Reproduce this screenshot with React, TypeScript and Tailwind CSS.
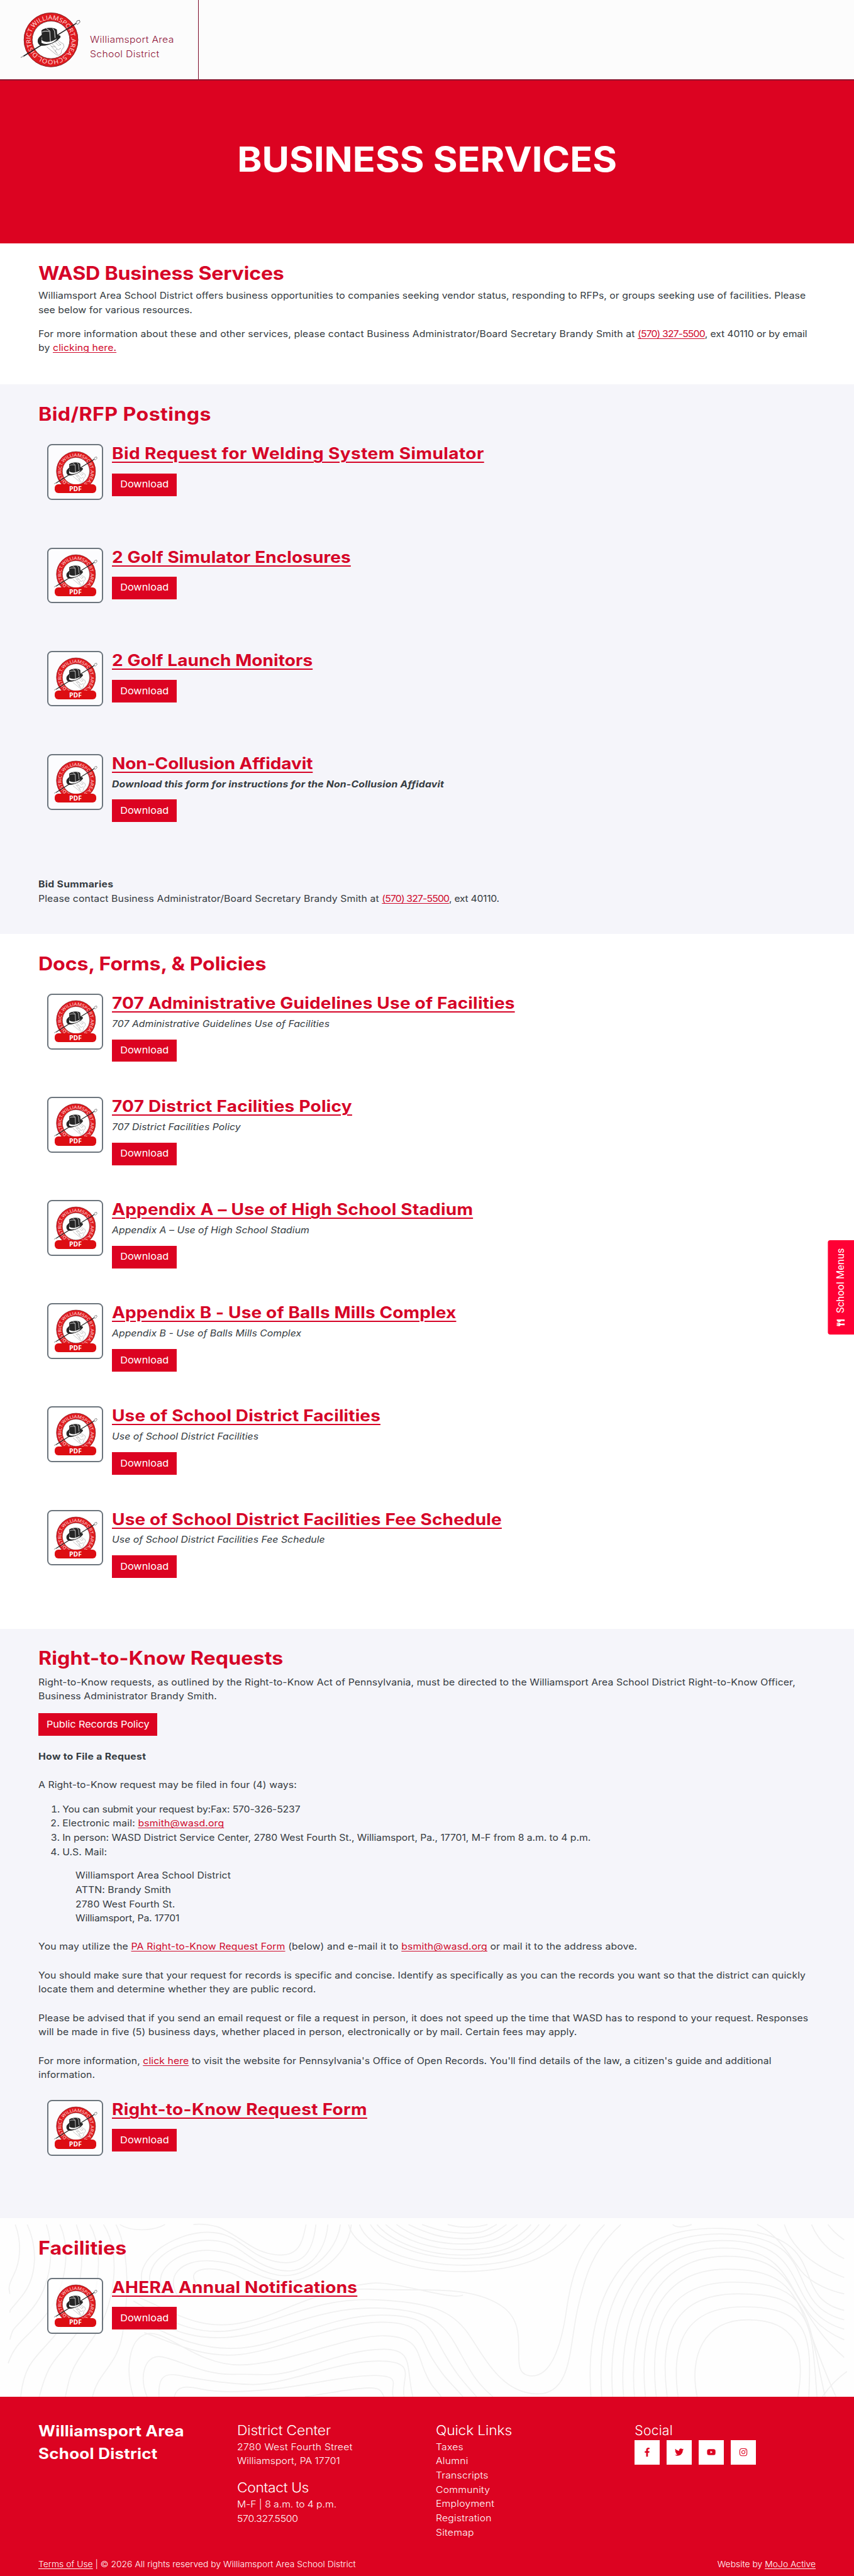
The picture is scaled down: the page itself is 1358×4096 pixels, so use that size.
import * as React from 'react';
import { FaFacebookF, FaTwitter, FaYoutube, FaInstagram, FaUtensils } from 'react-icons/fa';

type Doc = { title: string; tracking: string; desc?: string; strong?: boolean };

const BIDS: Doc[] = [
  { title: 'Bid Request for Welding System Simulator', tracking: 'tracking-[0.4px]' },
  { title: '2 Golf Simulator Enclosures', tracking: 'tracking-[0.08px]' },
  { title: '2 Golf Launch Monitors', tracking: 'tracking-[0.06px]' },
  {
    title: 'Non-Collusion Affidavit',
    tracking: 'tracking-[-0.1px]',
    desc: 'Download this form for instructions for the Non-Collusion Affidavit',
    strong: true,
  },
];

const DOCS: Doc[] = [
  {
    title: '707 Administrative Guidelines Use of Facilities',
    tracking: 'tracking-[0.18px]',
    desc: '707 Administrative Guidelines Use of Facilities',
  },
  { title: '707 District Facilities Policy', tracking: 'tracking-[0.23px]', desc: '707 District Facilities Policy' },
  {
    title: 'Appendix A – Use of High School Stadium',
    tracking: 'tracking-[0.22px]',
    desc: 'Appendix A – Use of High School Stadium',
  },
  {
    title: 'Appendix B - Use of Balls Mills Complex',
    tracking: 'tracking-[0.13px]',
    desc: 'Appendix B - Use of Balls Mills Complex',
  },
  { title: 'Use of School District Facilities', tracking: 'tracking-[0.11px]', desc: 'Use of School District Facilities' },
  {
    title: 'Use of School District Facilities Fee Schedule',
    tracking: 'tracking-[0.13px]',
    desc: 'Use of School District Facilities Fee Schedule',
  },
];

const QUICK_LINKS = ['Taxes', 'Alumni', 'Transcripts', 'Community', 'Employment', 'Registration', 'Sitemap'];

const SOCIAL = [FaFacebookF, FaTwitter, FaYoutube, FaInstagram];

function Seal({ className }: { className?: string }) {
  return (
    <svg viewBox="-52 -47 104 94" className={className}>
      <circle r="38.7" fill="none" stroke="#e01a1f" strokeWidth="14" />
      <circle r="45.4" fill="none" stroke="#7b2326" strokeWidth="1" />
      <circle r="31.7" fill="#fff" stroke="#6b2023" strokeWidth="1" />
      <path id="seal-ring" d="M-29.2-19.6A35.2 35.2 0 0 1 29.2 19.6A35.2 35.2 0 0 1-29.2-19.6" fill="none" />
      <text fill="#ffe3e0" className="font-['Open_Sans'] text-[10.3px]">
        <textPath href="#seal-ring" textLength="215" lengthAdjust="spacingAndGlyphs">
          WILLIAMSPORT.AREA.SCHOOL.DISTRICT.
        </textPath>
      </text>
      {/* cane */}
      <path d="M-47 28L43-28" stroke="#222" strokeWidth="1.7" />
      <path d="M-51 30l5-3" stroke="#aaa" strokeWidth="1.6" />
      <path d="M42-28l2-4 4-1 1 3-4 4z" fill="#fff" stroke="#555" strokeWidth="1" />
      {/* glove */}
      <path
        d="M-7 12L9 25l4 1 4-3 1-6 4-5-1-5-5-3-4-3-3 2M2 7l6 5M7 4l6 6 4-3M12 4l5 5M1 11l6 1 5 5 5-3M10 15l-3 4 4 5M-1 9l11 13"
        fill="none"
        stroke="#b0b0b0"
        strokeWidth="1"
      />
      {/* top hat */}
      <path d="M-21-3c-3 5-1 12 5 13C-5 11 11 3 16-4c1-3-2-4-5-4-4 7-20 12-27 6l2-7c-3 1-5 4-7 6z" fill="#262626" />
      <path d="M-16-1C-11 5 6 2 11-5l-2 5C3 7-10 9-16 5z" fill="#fff" />
      <path d="M-16-16c5-5 22-6 26-1l1 14C4 3-9 6-15 1z" fill="#262626" />
      <path d="M-8-19l6 4 1 18M-15-13c3-2 8-2 12-1M3-19l3 4 1 12" fill="none" stroke="#fff" strokeWidth="1" />
    </svg>
  );
}

function PdfBadge() {
  return (
    <div className="relative size-[94px] shrink-0 rounded-[8px] border-[2.2px] border-[#6c757d] bg-white/70">
      <Seal className="absolute left-[8px] top-[8.5px] h-[68px] w-[76px]" />
      <div className="absolute left-[10px] top-[65px] flex h-[15px] w-[70px] items-center justify-center rounded-[6px] bg-[#dd0d12] font-['Open_Sans'] text-[11px] font-bold leading-none text-white">
        PDF
      </div>
    </div>
  );
}

function Button({ children, className = '' }: { children: React.ReactNode; className?: string }) {
  return (
    <a className={`flex h-[38px] items-center justify-center bg-[#dc0321] text-base text-white ${className}`}>
      <span className="scale-x-[1.08] whitespace-nowrap">{children}</span>
    </a>
  );
}

function Link({ children, className = '' }: { children: React.ReactNode; className?: string }) {
  return <a className={`text-[#d00a2c] underline decoration-1 underline-offset-2 ${className}`}>{children}</a>;
}

function Heading({ children, className }: { children: React.ReactNode; className: string }) {
  return (
    <h2 className={`origin-left scale-x-110 text-[31px] font-bold leading-9 text-[#d60427] w-fit ${className}`}>
      {children}
    </h2>
  );
}

// wide body copy
function Copy({ children, className = '' }: { children: React.ReactNode; className?: string }) {
  return <p className={`w-fit origin-left scale-x-[1.08] whitespace-nowrap ${className}`}>{children}</p>;
}

function DocItem({ doc }: { doc: Doc }) {
  return (
    <article className="flex h-[174px] gap-[15px] pl-[15px]">
      <PdfBadge />
      <div>
        <h3
          className={`w-fit origin-left scale-x-110 whitespace-nowrap text-[27px] font-bold leading-8 text-[#d60427] underline decoration-2 underline-offset-[4px] ${doc.tracking}`}
        >
          {doc.title}
        </h3>
        {doc.desc && (
          <Copy
            className={
              doc.strong
                ? 'mt-[7px] mb-[14px] font-bold italic tracking-[0.2px]'
                : 'mt-[7px] mb-[14px] italic tracking-[0.04px]'
            }
          >
            {doc.desc}
          </Copy>
        )}
        <Button className={doc.desc ? 'w-[109px]' : 'mt-[17px] w-[109px]'}>Download</Button>
      </div>
    </article>
  );
}

const CONTOURS = [
  'M28 75C40 150 38 230 25 290S18 350 18 370',
  'M50 75C70 180 68 300 40 380S20 430 18 450',
  'M85 75C100 180 95 330 60 430S25 500 18 565',
  'M110 75C130 180 122 330 90 440S30 560 15 665',
  'M140 75C160 200 150 400 110 520S45 650 38 807',
  'M165 75C195 200 180 420 140 540S90 650 72 807',
  'M190 75C225 200 210 430 170 560S130 700 120 807',
  'M213 75C240 200 235 400 225 540S180 700 170 807',
  'M220 75C240 105 280 105 303 75',
  // ridge and the valley next to it
  'M355 75Q375 70 400 85C440 120 460 190 505 203S555 150 562 75',
  'M262 330C245 220 320 110 380 108S450 205 505 232S575 180 580 75',
  'M280 360C255 240 320 145 380 142S450 230 505 265S598 200 602 75',
  'M305 380C270 270 330 180 385 185S460 270 510 290S618 200 625 75',
  'M330 390C300 300 330 220 390 230S465 300 515 315S640 220 645 75',
  'M375 350C340 300 355 255 395 265S450 320 480 350S640 340 680 325S830 400 850 375',
  // small basin
  'M640 75C650 180 740 280 855 275S1020 200 1065 75',
  'M660 75C675 170 750 250 855 248S1000 180 1040 75',
  'M680 75C700 150 770 222 855 220S980 160 1010 75',
  'M692 75C720 150 780 207 855 205S965 150 990 75',
  'M708 75C740 140 790 184 855 182S950 140 975 75',
  'M728 75C760 130 800 160 855 158S925 120 950 75',
  'M750 75C785 115 815 136 855 135S910 110 930 75',
  'M775 75C805 100 825 112 858 112S895 95 912 75',
  'M822 75Q858 98 895 75',
  // long waves through the middle
  'M255 385C330 460 370 530 450 490S580 340 680 350S860 330 920 420S930 700 970 717S1030 600 1040 440S1065 180 1110 75',
  'M245 400C320 500 370 560 450 515S590 385 690 395S830 440 860 540S920 790 985 795S1045 600 1060 440S1090 180 1140 75',
  'M250 440C310 530 370 580 450 545S600 425 690 430S810 480 835 580S870 740 905 807',
  'M258 480C310 550 380 625 460 595S610 460 700 460S790 520 815 620S850 740 875 807',
  'M265 535C310 570 370 645 440 628S620 490 700 490S770 560 795 650S825 740 850 807',
  'M245 807C230 700 235 560 270 540S360 672 440 672S640 545 705 548S765 620 780 700S800 770 810 807',
  'M270 807C255 720 265 630 295 637S370 715 430 712S500 725 550 690S650 605 705 605S745 680 758 807',
  'M292 807C290 730 300 705 325 715S400 750 460 755S620 655 695 655S735 730 742 807',
  'M320 807C325 760 340 760 370 775S440 790 500 775S640 715 690 717S715 760 722 807',
  'M560 807C610 790 640 775 670 770S700 785 705 807',
  // right hand peaks
  'M1085 807C1075 500 1110 75 1325 92S1440 380 1550 440',
  'M1105 807C1095 500 1130 110 1325 115S1430 410 1550 480',
  'M1125 807C1115 520 1150 145 1325 143S1430 440 1550 520',
  'M1145 807C1135 540 1170 180 1325 175S1430 450 1550 565',
  'M1165 807C1155 560 1185 215 1330 210S1440 420 1550 640',
  'M1185 807C1175 580 1190 265 1335 265S1460 430 1535 807',
  'M1205 807C1195 600 1200 320 1345 320S1480 450 1515 807',
  'M1225 807C1215 620 1215 370 1355 370S1490 500 1500 807',
  'M1245 807C1235 640 1240 425 1365 425S1490 560 1485 807',
  'M1280 807C1265 640 1290 478 1375 480S1480 600 1465 807',
  'M1390 75C1430 120 1450 210 1470 270S1530 360 1550 370',
  'M1440 75C1450 150 1480 240 1550 300',
  'M1490 75C1500 130 1520 190 1550 220',
  'M1520 75C1530 105 1540 125 1550 140',
  'M1235 75Q1245 95 1270 75',
  'M1510 807Q1530 740 1555 700',
];

function Contours() {
  return (
    <svg viewBox="0 48 1568 759" preserveAspectRatio="none" className="absolute inset-0 size-full">
      <g fill="none" stroke="#f0f0f0" strokeWidth="1.8">
        {CONTOURS.map((d) => (
          <path key={d} d={d} vectorEffect="non-scaling-stroke" />
        ))}
      </g>
    </svg>
  );
}

export default function App() {
  return (
    <div className="relative w-full overflow-hidden bg-white font-['Inter',sans-serif] text-[15.5px] leading-6 text-[#353c42] [zoom:0.9433]">
      <header className="flex h-[136px] border-b-[2.2px] border-[#8c1730] bg-[#fcfcfc]">
        <div className="flex w-[335px] border-r-[1.1px] border-[#7d0c2b] pl-[34px] pt-[20px]">
          <Seal className="h-[94px] w-[104px] shrink-0" />
          <Copy className="ml-[14px] mt-[35px] font-light tracking-[0.3px] text-[#8f1338]">
            Williamsport Area
            <br />
            School District
          </Copy>
        </div>
      </header>

      <section className="flex h-[274px] items-center justify-center bg-[#dc0321]">
        <h1 className="mt-[-9px] scale-x-[1.085] whitespace-nowrap text-[58px] font-bold leading-none text-white">
          BUSINESS SERVICES
        </h1>
      </section>

      <section className="h-[238px] px-[65px] pt-[33px]">
        <Heading className="tracking-[-0.2px]">WASD Business Services</Heading>
        <Copy className="mt-[8px] tracking-[0.04px]">
          Williamsport Area School District offers business opportunities to companies seeking vendor status, responding
          to RFPs, or groups seeking use of facilities. Please
          <br />
          see below for various resources.
        </Copy>
        <Copy className="mt-4 tracking-[0.11px]">
          For more information about these and other services, please contact Business Administrator/Board Secretary
          Brandy Smith at <Link className="tracking-[-0.85px]">(570) 327-5500</Link>
          <span className="tracking-[-0.13px]">, ext 40110 or by email</span>
          <br />
          by <Link>clicking here.</Link>
        </Copy>
      </section>

      <section className="h-[926px] bg-[#f5f5fa] px-[65px] pt-[33px]">
        <Heading className="mb-8 tracking-[0.4px]">Bid/RFP Postings</Heading>
        {BIDS.map((doc) => (
          <DocItem key={doc.title} doc={doc} />
        ))}
        <Copy className="mt-[34px] font-bold tracking-[0.28px]">Bid Summaries</Copy>
        <Copy className="tracking-[0.1px]">
          Please contact Business Administrator/Board Secretary Brandy Smith at{' '}
          <Link className="tracking-[-0.85px]">(570) 327-5500</Link>
          <span className="tracking-[-0.3px]">, ext 40110.</span>
        </Copy>
      </section>

      <section className="h-[1172px] px-[65px] pt-[33px]">
        <Heading className="mb-8 tracking-[-0.1px]">Docs, Forms, &amp; Policies</Heading>
        {DOCS.map((doc) => (
          <DocItem key={doc.title} doc={doc} />
        ))}
      </section>

      <section className="h-[993px] bg-[#f5f5fa] px-[65px] pt-[31px] tracking-[0.07px]">
        <Heading className="tracking-[0.11px]">Right-to-Know Requests</Heading>
        <Copy className="mt-[11px] tracking-[0.1px]">
          Right-to-Know requests, as outlined by the Right-to-Know Act of Pennsylvania, must be directed to the
          Williamsport Area School District Right-to-Know Officer,
          <br />
          Business Administrator Brandy Smith.
        </Copy>
        <Button className="mt-4 w-[200px] tracking-[-0.1px]">Public Records Policy</Button>
        <Copy className="mt-[23px] font-bold tracking-[0.31px]">How to File a Request</Copy>
        <Copy className="mt-6">A Right-to-Know request may be filed in four (4) ways:</Copy>
        <ol className="mt-[17px] w-fit origin-left scale-x-[1.08] list-decimal whitespace-nowrap pl-[37.5px]">
          <li className="tracking-[-0.15px]">You can submit your request by:Fax: 570-326-5237</li>
          <li className="tracking-[0.15px]">
            Electronic mail: <Link>bsmith@wasd.org</Link>
          </li>
          <li className="tracking-[-0.06px]">
            In person: WASD District Service Center, 2780 West Fourth St., Williamsport, Pa., 17701, M-F from 8 a.m. to
            4 p.m.
          </li>
          <li>U.S. Mail:</li>
        </ol>
        <address className="mt-4 w-fit origin-left scale-x-[1.08] whitespace-nowrap pl-[58px] not-italic">
          Williamsport Area School District
          <br />
          ATTN: Brandy Smith
          <br />
          2780 West Fourth St.
          <br />
          <span className="tracking-[-0.2px]">Williamsport, Pa. 17701</span>
        </address>
        <Copy className="mt-6 tracking-[0.14px]">
          You may utilize the <Link>PA Right-to-Know Request Form</Link> (below) and e-mail it to{' '}
          <Link>bsmith@wasd.org</Link> or mail it to the address above.
        </Copy>
        <Copy className="mt-6">
          You should make sure that your request for records is specific and concise. Identify as specifically as you
          can the records you want so that the district can quickly
          <br />
          locate them and determine whether they are public record.
        </Copy>
        <Copy className="mt-6">
          Please be advised that if you send an email request or file a request in person, it does not speed up the time
          that WASD has to respond to your request. Responses
          <br />
          will be made in five (5) business days, whether placed in person, electronically or by mail. Certain fees may
          apply.
        </Copy>
        <Copy className="mt-6 mb-[30px]">
          For more information, <Link>click here</Link> to visit the website for Pennsylvania's Office of Open Records.
          You'll find details of the law, a citizen's guide and additional
          <br />
          information.
        </Copy>
        <DocItem doc={{ title: 'Right-to-Know Request Form', tracking: 'tracking-[0.29px]' }} />
      </section>

      <section className="relative h-[301px] bg-[#fefefe]">
        <Contours />
        <div className="relative px-[65px] pt-[33px]">
          <Heading className="mb-8 tracking-[0.05px]">Facilities</Heading>
          <DocItem doc={{ title: 'AHERA Annual Notifications', tracking: 'tracking-[0.2px]' }} />
        </div>
      </section>

      <footer className="h-[303px] bg-[#dc0321] pl-[65px] pt-[39px] text-white">
        <div className="grid h-[202px] w-[1340px] grid-cols-4">
          <p className="w-fit origin-left scale-x-110 text-[25px] font-bold leading-[39px] tracking-[0.25px]">
            Williamsport Area
            <br />
            School District
          </p>
          <div className="w-fit origin-left scale-x-[1.08] font-light tracking-[0.25px]">
            <h4 className="text-[22.5px] leading-[34px] tracking-[-0.2px]">District Center</h4>
            <p>2780 West Fourth Street</p>
            <p className="tracking-[0.05px]">Williamsport, PA 17701</p>
            <h4 className="mt-[15px] text-[22.5px] leading-[34px] tracking-[-0.4px]">Contact Us</h4>
            <p className="tracking-[-0.05px]">M-F | 8 a.m. to 4 p.m.</p>
            <p className="tracking-[-0.25px]">570.327.5500</p>
          </div>
          <div className="w-fit origin-left scale-x-[1.08] font-light tracking-[0.2px]">
            <h4 className="text-[22.5px] leading-[34px] tracking-[-0.2px]">Quick Links</h4>
            <ul>
              {QUICK_LINKS.map((item) => (
                <li key={item}>{item}</li>
              ))}
            </ul>
          </div>
          <div>
            <h4 className="text-[22.5px] font-light leading-[34px] tracking-[0.2px]">Social</h4>
            <div className="flex gap-[12px]">
              {SOCIAL.map((Icon, i) => (
                <a key={i} className="flex size-[42px] items-center justify-center bg-white text-[#dc0321]">
                  <Icon size={15} />
                </a>
              ))}
            </div>
          </div>
        </div>
        <div className="mt-[30px] flex justify-between pr-[65px] text-[14px] font-light">
          <p className="origin-left scale-x-[1.055] whitespace-nowrap">
            <a className="underline underline-offset-2">Terms of Use</a> | © 2026 All rights reserved by Williamsport
            Area School District
          </p>
          <p className="origin-right scale-x-[1.055] whitespace-nowrap">
            Website by <a className="underline underline-offset-2">MoJo Active</a>
          </p>
        </div>
      </footer>

      {/* School Menus side tab */}
      <a className="absolute right-0 top-[2091px] flex h-[159px] w-[45px] rotate-180 items-center justify-center gap-[9px] rounded-r-[4px] bg-[#ff0034] font-['Roboto'] text-[17px] text-white [writing-mode:vertical-rl]">
        <FaUtensils size={14} className="rotate-90" />
        <span className="tracking-[0.2px]">School Menus</span>
      </a>
    </div>
  );
}
